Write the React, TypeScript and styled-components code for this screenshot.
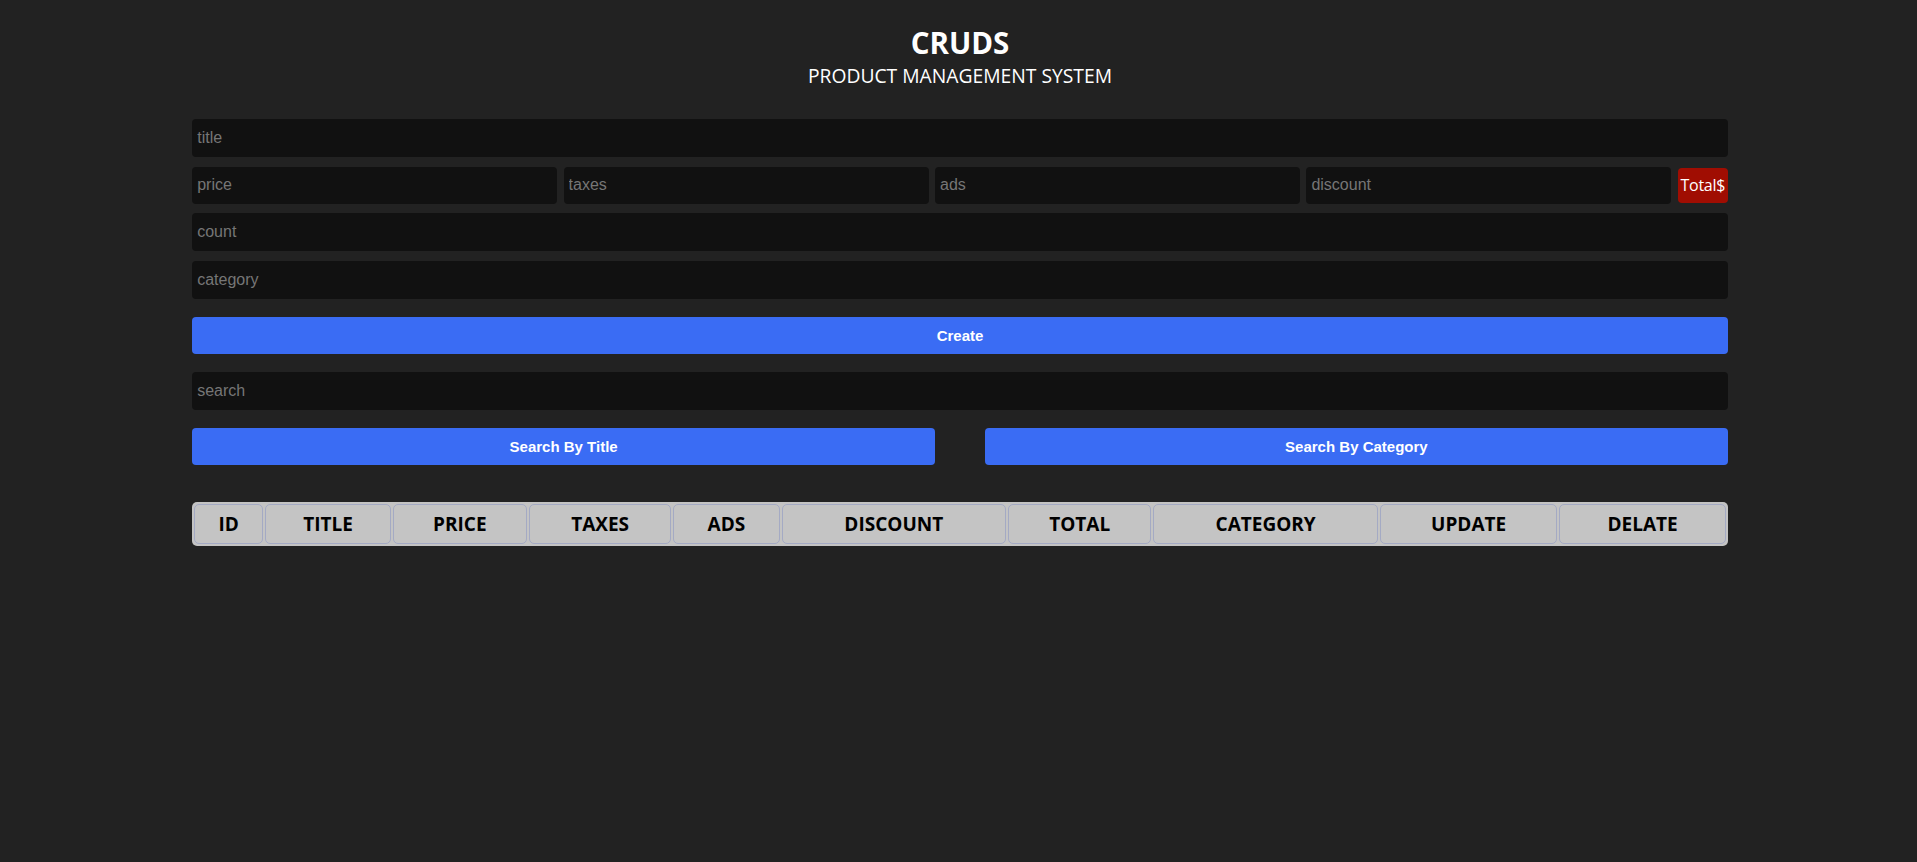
import React from "react";
import styled, { createGlobalStyle } from "styled-components";

const Global = createGlobalStyle`
  * { box-sizing: border-box; }
  html, body { margin: 0; padding: 0; background: #222222; }
  body { font-family: "Open Sans", "Noto Sans", sans-serif; color: #fff; }
`;

const Page = styled.div`
  width: calc(80% + 2px);
  margin: 0 0 0 calc(10% + 0.5px);
  padding-top: 25px;
`;

const Head = styled.header`
  display: flex;
  flex-direction: column;
  align-items: center;
  margin-bottom: 27px;
`;

const Title = styled.h2`
  margin: 0;
  font-size: 29.5px;
  line-height: 35px;
  font-weight: 700;
  color: #fff;
`;

const Subtitle = styled.p`
  margin: 0;
  font-size: 19.3px;
  line-height: 32px;
  font-weight: 400;
  color: #fff;
`;

const Inputs = styled.div`
  display: flex;
  flex-direction: column;
  gap: 9.5px;
`;

const Field = styled.input`
  display: block;
  width: 100%;
  height: 38px;
  padding: 4px 5px;
  border: none;
  outline: none;
  border-radius: 4px;
  background: #111111;
  color: #fff;
  font-family: "Liberation Sans", Arial, sans-serif;
  font-size: 16px;
  &::placeholder { color: #767676; }
`;

const PriceRow = styled.div`
  display: flex;
  align-items: center;
  gap: 6.5px;
  ${Field} { flex: 1; width: auto; min-width: 0; height: 37px; }
`;

const Total = styled.small`
  flex: none;
  width: 50px;
  height: 35px;
  display: flex;
  align-items: center;
  justify-content: center;
  background: #a00d02;
  border-radius: 4px;
  font-size: 16px;
  color: #fff;
  letter-spacing: -0.3px;
`;

const Button = styled.button`
  display: block;
  width: 100%;
  height: 37px;
  border: none;
  border-radius: 4px;
  background: #3a6cf4;
  color: #fff;
  font-family: "Liberation Sans", Arial, sans-serif;
  font-weight: 700;
  font-size: 15px;
  cursor: pointer;
`;

const Section = styled.div<{ $top: number }>`
  margin-top: ${(p) => p.$top}px;
`;

const SearchButtons = styled.div`
  display: grid;
  grid-template-columns: 1fr 1fr;
  column-gap: 50px;
  margin-top: 18px;
`;

const Table = styled.table`
  width: 100%;
  margin-top: 37px;
  table-layout: fixed;
  border-spacing: 2px;
  background: #c4c4c4;
  border-radius: 5px;
`;

const Th = styled.th<{ $w: number }>`
  width: ${(p) => p.$w}px;
  height: 40px;
  padding: 0;
  border: 1px solid #a4aac4;
  border-radius: 5px;
  color: #000;
  font-size: 19px;
  font-weight: 700;
  text-transform: uppercase;
`;

const columns: [string, number][] = [
  ["id", 69],
  ["title", 125],
  ["price", 134],
  ["taxes", 142],
  ["ads", 106],
  ["discount", 224],
  ["total", 143],
  ["category", 224],
  ["update", 177],
  ["delate", 166],
];

export default function App() {
  return (
    <>
      <Global />
      <Page>
        <Head>
          <Title>CRUDS</Title>
          <Subtitle>PRODUCT MANAGEMENT SYSTEM</Subtitle>
        </Head>
        <Inputs>
          <Field type="text" placeholder="title" />
          <PriceRow>
            <Field type="number" placeholder="price" />
            <Field type="number" placeholder="taxes" />
            <Field type="number" placeholder="ads" />
            <Field type="number" placeholder="discount" />
            <Total>Total$</Total>
          </PriceRow>
          <Field type="number" placeholder="count" />
          <Field type="text" placeholder="category" />
        </Inputs>
        <Section $top={18}>
          <Button>Create</Button>
        </Section>
        <Section $top={18}>
          <Field type="text" placeholder="search" />
          <SearchButtons>
            <Button>Search By Title</Button>
            <Button>Search By Category</Button>
          </SearchButtons>
        </Section>
        <Table>
          <thead>
            <tr>
              {columns.map(([c, w]) => (
                <Th key={c} $w={w}>{c}</Th>
              ))}
            </tr>
          </thead>
        </Table>
      </Page>
    </>
  );
}
